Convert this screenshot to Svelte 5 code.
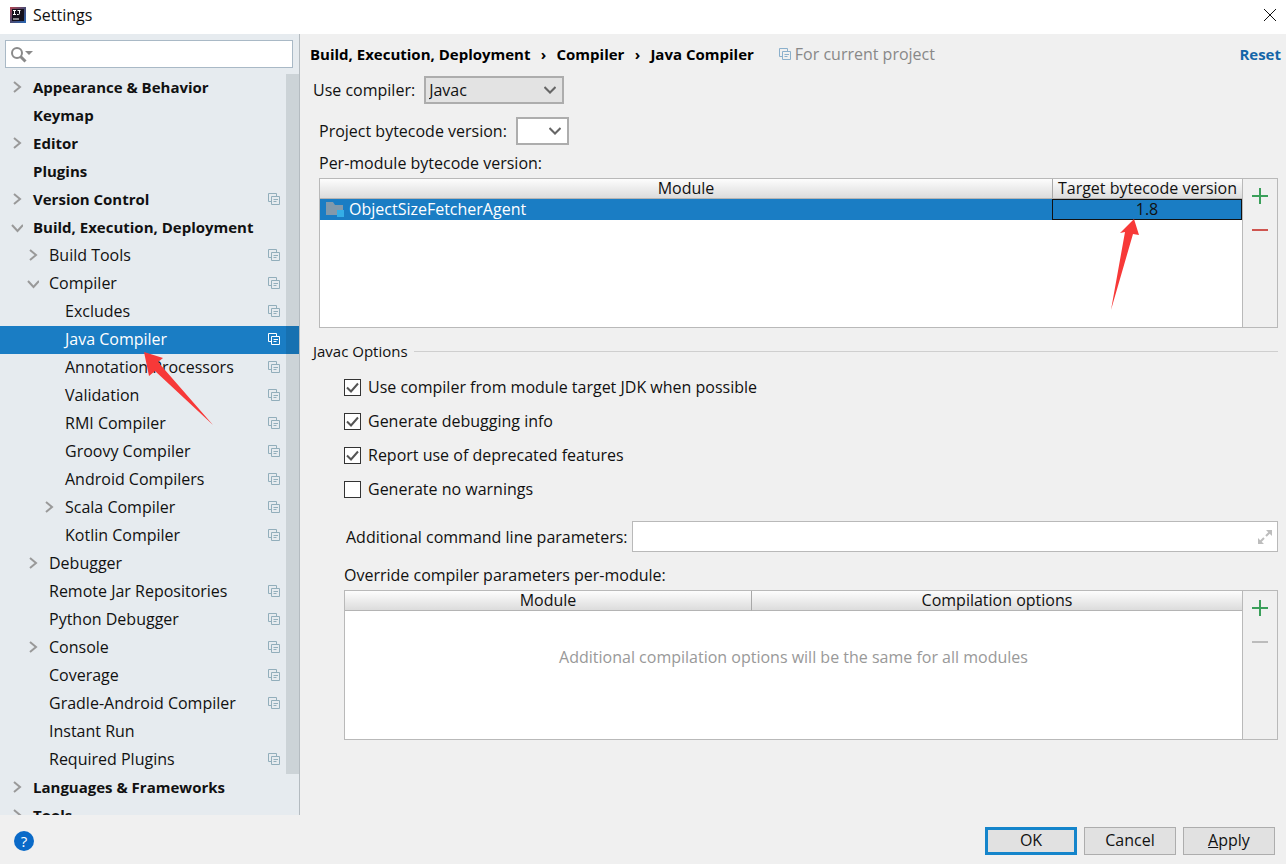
<!-- src/App.svelte -->
<script>
    const tree = [
        { label: "Appearance & Behavior", level: 0, arrow: "right" },
        { label: "Keymap", level: 0 },
        { label: "Editor", level: 0, arrow: "right" },
        { label: "Plugins", level: 0 },
        { label: "Version Control", level: 0, arrow: "right", project: true },
        { label: "Build, Execution, Deployment", level: 0, arrow: "down" },
        { label: "Build Tools", level: 1, arrow: "right", project: true },
        { label: "Compiler", level: 1, arrow: "down", project: true },
        { label: "Excludes", level: 2, project: true },
        { label: "Java Compiler", level: 2, project: true },
        { label: "Annotation Processors", level: 2, project: true },
        { label: "Validation", level: 2, project: true },
        { label: "RMI Compiler", level: 2, project: true },
        { label: "Groovy Compiler", level: 2, project: true },
        { label: "Android Compilers", level: 2, project: true },
        { label: "Scala Compiler", level: 2, arrow: "right", project: true },
        { label: "Kotlin Compiler", level: 2, project: true },
        { label: "Debugger", level: 1, arrow: "right" },
        { label: "Remote Jar Repositories", level: 1, project: true },
        { label: "Python Debugger", level: 1, project: true },
        { label: "Console", level: 1, arrow: "right", project: true },
        { label: "Coverage", level: 1, project: true },
        { label: "Gradle-Android Compiler", level: 1, project: true },
        { label: "Instant Run", level: 1 },
        { label: "Required Plugins", level: 1, project: true },
        { label: "Languages & Frameworks", level: 0, arrow: "right" },
        { label: "Tools", level: 0, arrow: "right" },
    ];

    let selected = "Java Compiler";
    let search = "";
    let compiler = "Javac";
    let parameters = "";

    let options = [
        { id: "target-jdk", label: "Use compiler from module target JDK when possible", checked: true },
        { id: "debug-info", label: "Generate debugging info", checked: true },
        { id: "deprecated", label: "Report use of deprecated features", checked: true },
        { id: "no-warnings", label: "Generate no warnings", checked: false },
    ];
</script>

{#snippet projectIcon()}
    <svg class="project-icon" width="12" height="12" viewBox="0 0 12 12" fill="none" stroke="currentColor" aria-hidden="true">
        <path d="M3 8.500H0.500v-8h8v2.500" />
        <path d="M3.500 3.500h8v8h-8z" />
        <path d="M5.500 6.500h4.500M5.500 8.500h3" />
    </svg>
{/snippet}

{#snippet tableTools(canRemove)}
    <div class="table-tools">
        <button aria-label="Add">
            <svg width="16" height="16" viewBox="0 0 16 16" aria-hidden="true">
                <path d="M0 8h16M8 0v16" stroke="#3a9f5a" stroke-width="2" />
            </svg>
        </button>
        <button aria-label="Remove" disabled={!canRemove}>
            <svg width="16" height="16" viewBox="0 0 16 16" aria-hidden="true">
                <path d="M0 8h16" stroke={canRemove ? "#cf5550" : "#bcbcbc"} stroke-width="2" />
            </svg>
        </button>
    </div>
{/snippet}

<div class="dialog">
    <header class="title-bar">
        <svg width="16" height="16" viewBox="0 0 16 16" aria-hidden="true">
            <defs>
                <linearGradient id="logo" x1="0" y1="0" x2="1" y2="1">
                    <stop offset="0" stop-color="#b5434f" />
                    <stop offset="0.5" stop-color="#4a4a72" />
                    <stop offset="1" stop-color="#2767b5" />
                </linearGradient>
            </defs>
            <rect width="16" height="16" fill="url(#logo)" />
            <rect x="2" y="2" width="12" height="12" fill="#14101c" />
            <path d="M3 3.500h3M4.500 3.500v4M3 7.500h3M7.500 3.500h3M9.500 3.500v3q0 1-1 1h-1.500" fill="none" stroke="#fff" />
            <path d="M3 12h6" stroke="#fff" />
        </svg>
        <h1>Settings</h1>
        <button class="close" aria-label="Close">
            <svg width="12" height="12" viewBox="0 0 12 12" aria-hidden="true">
                <path d="M0 0l12 12M12 0L0 12" stroke="#111" />
            </svg>
        </button>
    </header>

    <div class="content">
        <aside>
            <div class="search">
                <svg width="24" height="17" viewBox="0 0 24 17" aria-hidden="true">
                    <circle cx="7" cy="7" r="5" fill="none" stroke="#8a8a8a" stroke-width="2" />
                    <path d="M10.500 10.500l5 5" stroke="#8a8a8a" stroke-width="3" />
                    <path d="M15 5h8l-4 4z" fill="#8a8a8a" />
                </svg>
                <input type="text" aria-label="Search settings" bind:value={search} />
            </div>

            <nav class="tree">
                {#each tree as item}
                    <button
                        class="tree-row level-{item.level}"
                        class:selected={item.label === selected}
                        on:click={() => (selected = item.label)}
                    >
                        <span class="twisty">
                            {#if item.arrow}
                                <svg width="12" height="12" viewBox="0 0 12 12" fill="none" stroke="#999" stroke-width="2" aria-hidden="true">
                                    <path d={item.arrow === "right" ? "M3 1l6 5l-6 5" : "M1 4l5.500 6l5.500 -6"} />
                                </svg>
                            {/if}
                        </span>
                        <span class="tree-label">{item.label}</span>
                        {#if item.project}
                            {@render projectIcon()}
                        {/if}
                    </button>
                {/each}
                <div class="scroll-thumb"></div>
                <svg class="tree-pointer" width="70" height="74" viewBox="0 0 70 74" aria-hidden="true">
                    <path d="M0 0l19 6l-5 4l55 63l-58 -54l-6 5z" fill="#f73938" />
                </svg>
            </nav>
        </aside>

        <main>
            <div class="breadcrumb">
                <h2>
                    <span>Build, Execution, Deployment</span>
                    <span class="separator">›</span>
                    <span>Compiler</span>
                    <span class="separator">›</span>
                    <span>Java Compiler</span>
                </h2>
                <span class="scope">
                    {@render projectIcon()}
                    For current project
                </span>
                <a href="#reset">Reset</a>
            </div>

            <div class="field">
                <label for="compiler">Use compiler:</label>
                <span class="select wide">
                    <select id="compiler" bind:value={compiler}>
                        <option>Javac</option>
                        <option>Eclipse</option>
                        <option>Ajc</option>
                    </select>
                    <svg width="12" height="8" viewBox="0 0 12 8" fill="none" stroke="#666" stroke-width="2" aria-hidden="true">
                        <path d="M0.500 1l5.500 5.500l5.500 -5.500" />
                    </svg>
                </span>
            </div>

            <section class="bytecode">
                <div class="field">
                    <label for="bytecode">Project bytecode version:</label>
                    <span class="select narrow">
                        <select id="bytecode">
                            <option></option>
                            <option>1.8</option>
                        </select>
                        <svg width="12" height="8" viewBox="0 0 12 8" fill="none" stroke="#666" stroke-width="2" aria-hidden="true">
                            <path d="M0.500 1l5.500 5.500l5.500 -5.500" />
                        </svg>
                    </span>
                </div>
                <h3>Per-module bytecode version:</h3>
                <div class="table-panel">
                    <div class="table-body">
                        <table>
                            <thead>
                                <tr><th>Module</th><th class="target">Target bytecode version</th></tr>
                            </thead>
                            <tbody>
                                <tr>
                                    <td>
                                        <div class="module">
                                            <svg width="20" height="17" viewBox="0 0 20 17" aria-hidden="true">
                                                <path d="M1 1h7l2 3h8v10H1z" fill="#8299ab" />
                                                <path d="M12 9h7v7h-7z" fill="#35aee6" />
                                            </svg>
                                            ObjectSizeFetcherAgent
                                        </div>
                                    </td>
                                    <td class="version">1.8</td>
                                </tr>
                            </tbody>
                        </table>
                        <svg class="version-pointer" width="30" height="92" viewBox="0 0 30 92" aria-hidden="true">
                            <path d="M24 0l5 16l-6 -1l-22 76l14 -78l-5 1z" fill="#f73938" />
                        </svg>
                    </div>
                    {@render tableTools(true)}
                </div>
            </section>

            <fieldset>
                <legend><span>Javac Options</span></legend>
                {#each options as option}
                    <label class="check" for={option.id}>
                        <input type="checkbox" id={option.id} bind:checked={option.checked} />
                        <svg width="17" height="17" viewBox="0 0 17 17" fill="none" aria-hidden="true">
                            <rect x="0.500" y="0.500" width="16" height="16" fill="#fff" stroke="#333" />
                            {#if option.checked}
                                <path d="M3 8.500l4 4l7 -8" stroke="#555" stroke-width="2" />
                            {/if}
                        </svg>
                        {option.label}
                    </label>
                {/each}

                <div class="parameters">
                    <label for="parameters">Additional command line parameters:</label>
                    <div class="expandable">
                        <input type="text" id="parameters" bind:value={parameters} />
                        <button aria-label="Expand">
                            <svg width="16" height="16" viewBox="0 0 16 16" aria-hidden="true">
                                <path d="M9 1h6v6zM1 9v6h6z" fill="#bdbdbd" />
                                <path d="M9 7l4 -4M3 13l4 -4" stroke="#bdbdbd" stroke-width="2" />
                            </svg>
                        </button>
                    </div>
                </div>

                <h3>Override compiler parameters per-module:</h3>
                <div class="table-panel">
                    <div class="table-body">
                        <table>
                            <thead>
                                <tr><th class="override-module">Module</th><th>Compilation options</th></tr>
                            </thead>
                        </table>
                        <p>Additional compilation options will be the same for all modules</p>
                    </div>
                    {@render tableTools(false)}
                </div>
            </fieldset>
        </main>
    </div>

    <footer>
        <button class="help" aria-label="Help">?</button>
        <button class="action primary">OK</button>
        <button class="action">Cancel</button>
        <button class="action"><u>A</u>pply</button>
    </footer>
</div>

<style>
    :global(body) {
        margin: 0;
    }

    .dialog {
        display: flex;
        flex-direction: column;
        height: 100vh;
        background: #f0f0f0;
        color: #111;
        font-family: "Open Sans", "Noto Sans", sans-serif;
        font-size: 16px;
        line-height: 20px;
    }

    .dialog * {
        box-sizing: border-box;
    }

    svg {
        display: block;
        flex: none;
    }

    h1,
    h2,
    h3,
    p {
        margin: 0;
        font-size: 16px;
        font-weight: 400;
    }

    button,
    input,
    select {
        margin: 0;
        padding: 0;
        border: 0;
        background: none;
        color: inherit;
        font: inherit;
    }

    .title-bar {
        display: flex;
        align-items: center;
        gap: 7px;
        height: 34px;
        padding: 0 10px 4px;
        background: #fff;
    }

    .close {
        margin-left: auto;
    }

    .content {
        display: flex;
        flex: 1;
        min-height: 0;
    }

    aside {
        display: flex;
        flex-direction: column;
        flex: none;
        width: 300px;
        border-right: 1px solid #b4bbc0;
        background: #e6ebef;
    }

    .search {
        display: flex;
        align-items: center;
        flex: none;
        height: 28px;
        margin: 6px 6px 6px 5px;
        padding: 0 4px;
        border: 1px solid #a9b9c6;
        background: #fff;
    }

    .search input {
        flex: 1;
        min-width: 0;
        outline: none;
    }

    .tree {
        position: relative;
        flex: 1;
        min-height: 0;
        overflow: hidden;
    }

    .tree-row {
        display: flex;
        align-items: center;
        width: 100%;
        height: 28px;
        padding: 0 19px 2px 0;
        text-align: left;
    }

    .level-0 {
        padding-left: 11px;
        font-size: 15px;
        font-weight: 700;
    }

    .level-1 {
        padding-left: 27px;
    }

    .level-2 {
        padding-left: 43px;
    }

    .selected {
        background: #1a7dc4;
        color: #fff;
    }

    .twisty {
        width: 22px;
    }

    .tree-label {
        flex: 1;
        white-space: nowrap;
    }

    .project-icon {
        color: #92aebb;
    }

    .selected .project-icon {
        color: #fff;
    }

    .scroll-thumb {
        position: absolute;
        top: 0;
        right: 0;
        bottom: 41px;
        width: 13px;
        background: rgba(0, 20, 30, 0.11);
    }

    .tree-pointer {
        position: absolute;
        top: 278px;
        left: 144px;
    }

    main {
        flex: 1;
        min-width: 0;
        padding: 10px 8px 0 13px;
    }

    .breadcrumb {
        display: flex;
        align-items: center;
        margin: 0 -3px;
        color: #000;
    }

    h2,
    .breadcrumb a {
        font-size: 15px;
        font-weight: 700;
    }

    h2 {
        display: flex;
    }

    .separator {
        width: 26px;
        text-align: center;
    }

    .scope {
        display: flex;
        align-items: center;
        gap: 4px;
        margin-left: 25px;
        color: #888;
    }

    .scope .project-icon {
        color: #8bb0cc;
    }

    .breadcrumb a {
        margin-left: auto;
        color: #1465a8;
        text-decoration: none;
    }

    .field {
        display: flex;
        align-items: center;
        gap: 9px;
        margin-top: 12px;
    }

    .select {
        display: flex;
        align-items: center;
        position: relative;
        height: 28px;
        border: 2px solid #adadad;
        background: #e3e3e3;
    }

    .select select {
        width: 100%;
        height: 100%;
        padding-left: 3px;
        appearance: none;
    }

    .select svg {
        position: absolute;
        right: 6px;
        pointer-events: none;
    }

    .wide {
        width: 140px;
    }

    .narrow {
        width: 53px;
        background: #fff;
    }

    .bytecode {
        padding-left: 6px;
    }

    .bytecode .field {
        margin-top: 13px;
    }

    .bytecode h3 {
        margin: 8px 0 5px;
    }

    .table-panel {
        display: flex;
        height: 150px;
        border: 1px solid #b9b9b9;
        background: #fff;
    }

    .table-body {
        position: relative;
        flex: 1;
    }

    .table-tools {
        display: flex;
        flex-direction: column;
        align-items: center;
        gap: 18px;
        width: 35px;
        padding-top: 9px;
        border-left: 1px solid #b9b9b9;
        background: #f0f0f0;
    }

    table {
        width: 100%;
        border-collapse: separate;
        border-spacing: 0;
        table-layout: fixed;
    }

    th,
    td {
        padding: 0;
        font-weight: 400;
        line-height: 19px;
    }

    th {
        border-bottom: 1px solid #b4b4b4;
        background: linear-gradient(#fdfdfd, #dcdcdc);
    }

    th + th {
        border-left: 1px solid #a8a8a8;
    }

    td {
        background: #1a7dc4;
        color: #fff;
    }

    .target {
        width: 190px;
    }

    .module {
        display: flex;
        align-items: center;
        gap: 4px;
        padding-left: 5px;
    }

    .version {
        border: 1px solid #111;
        color: #111;
        text-align: center;
    }

    .version-pointer {
        position: absolute;
        top: 40px;
        right: 102px;
    }

    fieldset {
        min-width: 0;
        margin: 13px 0 0;
        padding: 0 0 0 31px;
        border: 0;
    }

    legend {
        display: flex;
        align-items: center;
        gap: 6px;
        width: calc(100% + 31px);
        margin-left: -31px;
        padding: 0;
        font-size: 15px;
    }

    legend::after {
        flex: 1;
        height: 1px;
        background: #cfcfcf;
        content: "";
    }

    .check {
        display: flex;
        align-items: center;
        gap: 7px;
        height: 34px;
    }

    .check:first-of-type {
        margin-top: 9px;
    }

    .check input {
        position: absolute;
        opacity: 0;
    }

    .parameters {
        display: flex;
        align-items: center;
        gap: 4px;
        margin-top: 15px;
        padding-left: 2px;
    }

    .expandable {
        display: flex;
        align-items: center;
        flex: 1;
        height: 31px;
        padding: 0 4px;
        border: 1px solid #b9b9b9;
        background: #fff;
    }

    .expandable input {
        flex: 1;
        min-width: 0;
        outline: none;
    }

    fieldset h3 {
        margin: 13px 0 5px;
    }

    .override-module {
        width: 406px;
    }

    .table-body p {
        margin-top: 36px;
        color: #999;
        text-align: center;
    }

    footer {
        display: flex;
        align-items: center;
        gap: 7px;
        height: 49px;
        padding: 3px 11px 0 14px;
    }

    .help {
        width: 20px;
        height: 20px;
        margin-right: auto;
        border-radius: 50%;
        background: #0a6ac8;
        color: #fff;
        font-size: 15px;
    }

    .action {
        width: 92px;
        height: 28px;
        padding-bottom: 2px;
        border: 1px solid #adadad;
        background: #e1e1e1;
    }

    .primary {
        border: 3px solid #1585cb;
    }
</style>
